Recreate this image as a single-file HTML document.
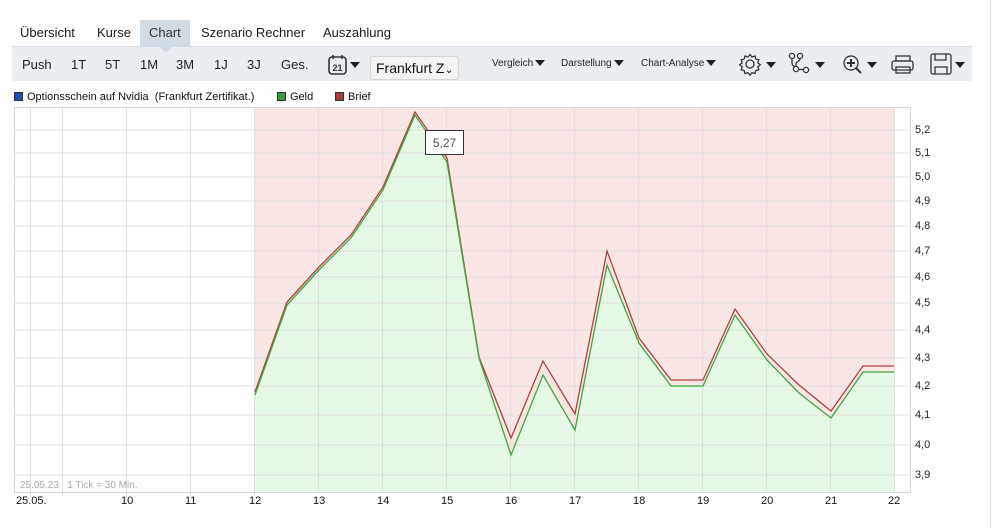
<!DOCTYPE html>
<html><head><meta charset="utf-8"><style>
*{margin:0;padding:0;box-sizing:border-box}
body{width:993px;height:528px;background:#fff;font-family:"Liberation Sans",sans-serif;position:relative;overflow:hidden;color:#222}
.tab{position:absolute;top:20px;height:26px;line-height:26px;font-size:13px;color:#1a1a1a}
.bar{position:absolute;left:12px;top:46px;width:960px;height:35px;background:#eaeef2;border-top:1px solid #d3dce4}
.b{position:absolute;top:57px;font-size:13px;color:#222}
.s{position:absolute;top:58px;font-size:10px;color:#222}
.tri{display:inline-block;width:0;height:0;border-left:5px solid transparent;border-right:5px solid transparent;border-top:6px solid #222;vertical-align:middle;margin-left:2px}
.leg{position:absolute;top:91px;font-size:11px;color:#111}
.sq{display:inline-block;width:9px;height:9px;margin-right:4px;vertical-align:-1px;border:1px solid #333}
.yl{position:absolute;left:915px;font-size:11px;color:#222}
.xl{position:absolute;top:495px;font-size:11px;color:#111}
</style></head><body>
<div class="tab" style="left:20px">Übersicht</div>
<div class="tab" style="left:97px">Kurse</div>
<div style="position:absolute;left:140px;top:20px;width:50px;height:26px;background:#d0dbe3"></div>
<div class="tab" style="left:149px;color:#333">Chart</div>
<div class="tab" style="left:201px">Szenario Rechner</div>
<div class="tab" style="left:323px">Auszahlung</div>
<div class="bar"></div>
<div style="position:absolute;left:159px;top:46px;width:0;height:0;border-left:7px solid transparent;border-right:7px solid transparent;border-top:7px solid #d0dbe3"></div>
<div class="b" style="left:22px">Push</div>
<div class="b" style="left:71px">1T</div>
<div class="b" style="left:105px">5T</div>
<div class="b" style="left:140px">1M</div>
<div class="b" style="left:176px">3M</div>
<div class="b" style="left:214px">1J</div>
<div class="b" style="left:247px">3J</div>
<div class="b" style="left:281px">Ges.</div>
<svg style="position:absolute;left:327px;top:54px" width="36" height="24"><rect x="2" y="3" width="17" height="17" rx="3" fill="none" stroke="#333" stroke-width="1.6"/><line x1="6" y1="1" x2="6" y2="5" stroke="#333" stroke-width="1.5"/><line x1="15" y1="1" x2="15" y2="5" stroke="#333" stroke-width="1.5"/><text x="10.5" y="17" font-size="9" font-weight="bold" text-anchor="middle" font-family="Liberation Sans" fill="#333">21</text><path d="M23 8h10l-5 6z" fill="#222"/></svg>
<div style="position:absolute;left:370px;top:56px;width:89px;height:24px;border:1px solid #d5d5d5;border-radius:3px;background:#f4f4f4;font-size:14px;line-height:22px;padding-left:5px;color:#111;overflow:hidden;white-space:nowrap">Frankfurt Z<span style="font-size:11px">⌄</span></div>
<div class="s" style="left:492px">Vergleich<span class="tri"></span></div>
<div class="s" style="left:561px">Darstellung<span class="tri"></span></div>
<div class="s" style="left:641px">Chart-Analyse<span class="tri"></span></div>
<svg style="position:absolute;left:0;top:46px" width="993" height="35" fill="none" stroke="#333" stroke-width="1.3">
<circle cx="750" cy="18" r="4"/><path d="M750 8.5l2 2.5 3-1 .8 3 3 .8-1 3 2.5 2-2.5 2 1 3-3 .8-.8 3-3-1-2 2.5-2-2.5-3 1-.8-3-3-.8 1-3-2.5-2 2.5-2-1-3 3-.8.8-3 3 1z"/>
<path d="M766 16h10l-5 6z" fill="#222" stroke="none"/>
<circle cx="792" cy="10" r="2.6"/><circle cx="800" cy="10" r="2.6"/><circle cx="796" cy="23" r="2.6"/><circle cx="806" cy="24" r="2.6"/><path d="M792 12.6v4c0 3 2 4 3 4.5M800 12.6c0 3-4 3-4 5v3M798.6 23.5h4.8"/>
<path d="M815 16h10l-5 6z" fill="#222" stroke="none"/>
<circle cx="851" cy="17" r="7"/><path d="M856 22l5 5M851 13v8M847 17h8" stroke-width="2"/>
<path d="M867 16h10l-5 6z" fill="#222" stroke="none"/>
<rect x="896" y="10" width="14" height="5"/><rect x="892" y="15" width="21" height="9" rx="2"/><rect x="896" y="21" width="14" height="6"/>
<rect x="931" y="8" width="20" height="20" rx="2"/><path d="M935 8v6h11V8M935 28v-7h12v7"/>
<path d="M955 16h10l-5 6z" fill="#222" stroke="none"/>
</svg>
<div class="leg" style="left:14px"><span class="sq" style="background:#1f4fa8"></span>Optionsschein auf Nvidia &nbsp;(Frankfurt Zertifikat.)</div>
<div class="leg" style="left:277px"><span class="sq" style="background:#3a9a3a"></span>Geld</div>
<div class="leg" style="left:335px"><span class="sq" style="background:#a83a3a"></span>Brief</div>
<svg style="position:absolute;left:0;top:0" width="993" height="528">
<rect x="255" y="107" width="639" height="385" fill="#fbe6e6"/>
<polygon fill="#e6f8e6" points="255,395 287,305 319,270 351,238 383,190 415,115 447,162 479,358 511,455 543,375 575,430 607,265 639,343 671,386 703,386 735,315 767,360 799,393 831,418 863,372 894,372 894,492 255,492"/>
<g stroke="#ddd" stroke-width="1" opacity="0.9">
<path d="M14 130H910M14 153H910M14 177H910M14 201H910M14 226H910M14 251H910M14 277H910M14 303H910M14 330H910M14 358H910M14 386H910M14 415H910M14 445H910M14 475H910"/>
<path d="M30.5 107V497M62.5 107V497M126.5 107V497M190.5 107V497M254.5 107V497M318.5 107V492M382.5 107V492M446.5 107V492M510.5 107V492M574.5 107V492M638.5 107V492M702.5 107V492M766.5 107V492M830.5 107V492M894.5 107V492"/>
</g>
<rect x="14.5" y="107.5" width="896" height="385" fill="none" stroke="#d8d8d8"/>
<polyline fill="none" stroke="#b04040" stroke-width="1.3" points="255,392 287,302 319,267 351,235 383,187 415,112 447,158 479,357 511,438 543,361 575,414 607,251 639,338 671,380 703,380 735,309 767,354 799,385 831,411 863,366 894,366"/>
<polyline fill="none" stroke="#3fa63f" stroke-width="1.3" points="255,395 287,305 319,270 351,238 383,190 415,115 447,162 479,358 511,455 543,375 575,430 607,265 639,343 671,386 703,386 735,315 767,360 799,393 831,418 863,372 894,372"/>
<rect x="425.5" y="130.5" width="38" height="24" fill="#fff" stroke="#333"/>
<text x="444.5" y="147" font-size="12" text-anchor="middle" fill="#555" font-family="Liberation Sans">5,27</text>
<line x1="990.5" y1="0" x2="990.5" y2="528" stroke="#ddd"/>
</svg>
<div class="yl" style="top:124px">5,2</div><div class="yl" style="top:147px">5,1</div><div class="yl" style="top:171px">5,0</div><div class="yl" style="top:195px">4,9</div><div class="yl" style="top:220px">4,8</div><div class="yl" style="top:245px">4,7</div><div class="yl" style="top:271px">4,6</div><div class="yl" style="top:297px">4,5</div><div class="yl" style="top:324px">4,4</div><div class="yl" style="top:352px">4,3</div><div class="yl" style="top:380px">4,2</div><div class="yl" style="top:409px">4,1</div><div class="yl" style="top:439px">4,0</div><div class="yl" style="top:469px">3,9</div>
<div style="position:absolute;left:20px;top:480px;font-size:10px;color:#aaa">25.05.23 &nbsp;&nbsp;1 Tick = 30 Min.</div>
<div class="xl" style="left:16px">25.05.</div>
<div class="xl" style="left:121px">10</div><div class="xl" style="left:185px">11</div><div class="xl" style="left:249px">12</div><div class="xl" style="left:313px">13</div><div class="xl" style="left:377px">14</div><div class="xl" style="left:441px">15</div><div class="xl" style="left:505px">16</div><div class="xl" style="left:569px">17</div><div class="xl" style="left:633px">18</div><div class="xl" style="left:697px">19</div><div class="xl" style="left:761px">20</div><div class="xl" style="left:825px">21</div><div class="xl" style="left:888px">22</div>
</body></html>
